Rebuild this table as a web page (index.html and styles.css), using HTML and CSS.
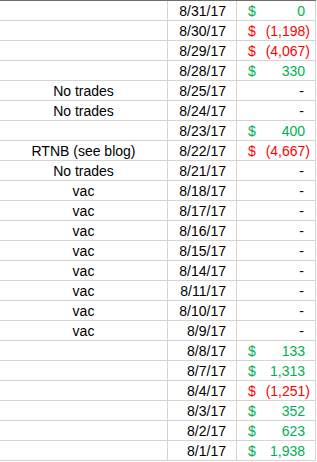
FILE: index.html
```
<!DOCTYPE html>
<html>
<head>
<meta charset="utf-8">
<link rel="stylesheet" href="styles.css">
</head>
<body>
<table class="sheet">
<tr><td class="note"></td><td class="date">8/31/17</td><td class="money pos"><span class="cur">$</span><span class="amt">0</span></td></tr>
<tr><td class="note"></td><td class="date">8/30/17</td><td class="money neg"><span class="cur">$</span><span class="amt">(1,198)</span></td></tr>
<tr><td class="note"></td><td class="date">8/29/17</td><td class="money neg"><span class="cur">$</span><span class="amt">(4,067)</span></td></tr>
<tr><td class="note"></td><td class="date">8/28/17</td><td class="money pos"><span class="cur">$</span><span class="amt">330</span></td></tr>
<tr><td class="note">No trades</td><td class="date">8/25/17</td><td class="money nil"><span class="amt">-</span></td></tr>
<tr><td class="note">No trades</td><td class="date">8/24/17</td><td class="money nil"><span class="amt">-</span></td></tr>
<tr><td class="note"></td><td class="date">8/23/17</td><td class="money pos"><span class="cur">$</span><span class="amt">400</span></td></tr>
<tr><td class="note">RTNB (see blog)</td><td class="date">8/22/17</td><td class="money neg"><span class="cur">$</span><span class="amt">(4,667)</span></td></tr>
<tr><td class="note">No trades</td><td class="date">8/21/17</td><td class="money nil"><span class="amt">-</span></td></tr>
<tr><td class="note">vac</td><td class="date">8/18/17</td><td class="money nil"><span class="amt">-</span></td></tr>
<tr><td class="note">vac</td><td class="date">8/17/17</td><td class="money nil"><span class="amt">-</span></td></tr>
<tr><td class="note">vac</td><td class="date">8/16/17</td><td class="money nil"><span class="amt">-</span></td></tr>
<tr><td class="note">vac</td><td class="date">8/15/17</td><td class="money nil"><span class="amt">-</span></td></tr>
<tr><td class="note">vac</td><td class="date">8/14/17</td><td class="money nil"><span class="amt">-</span></td></tr>
<tr><td class="note">vac</td><td class="date">8/11/17</td><td class="money nil"><span class="amt">-</span></td></tr>
<tr><td class="note">vac</td><td class="date">8/10/17</td><td class="money nil"><span class="amt">-</span></td></tr>
<tr><td class="note">vac</td><td class="date">8/9/17</td><td class="money nil"><span class="amt">-</span></td></tr>
<tr><td class="note"></td><td class="date">8/8/17</td><td class="money pos"><span class="cur">$</span><span class="amt">133</span></td></tr>
<tr><td class="note"></td><td class="date">8/7/17</td><td class="money pos"><span class="cur">$</span><span class="amt">1,313</span></td></tr>
<tr><td class="note"></td><td class="date">8/4/17</td><td class="money neg"><span class="cur">$</span><span class="amt">(1,251)</span></td></tr>
<tr><td class="note"></td><td class="date">8/3/17</td><td class="money pos"><span class="cur">$</span><span class="amt">352</span></td></tr>
<tr><td class="note"></td><td class="date">8/2/17</td><td class="money pos"><span class="cur">$</span><span class="amt">623</span></td></tr>
<tr><td class="note"></td><td class="date">8/1/17</td><td class="money pos"><span class="cur">$</span><span class="amt">1,938</span></td></tr>
</table>
</body>
</html>
```
FILE: styles.css
```
html, body {
  margin: 0;
  padding: 0;
  background: #ffffff;
}
.sheet {
  border-collapse: separate;
  border-spacing: 0;
  border-top: 1px solid #6e6e6e;
  font-family: "Liberation Sans", Arial, sans-serif;
  font-size: 14px;
  color: #000000;
  table-layout: fixed;
  width: 316px;
}
.sheet td {
  height: 19px;
  padding: 1px 0 0 0;
  box-sizing: border-box;
  line-height: 18px;
  border-right: 1px solid #d4d4d4;
  border-bottom: 1px solid #d4d4d4;
  white-space: nowrap;
  overflow: hidden;
}
.sheet tr {
  height: 20px;
}
.sheet td.note {
  width: 168px;
  text-align: center;
}
.sheet td.date {
  width: 69px;
  text-align: right;
  padding-right: 10px;
}
.sheet td.money {
  width: 79px;
}
.cur {
  float: left;
  margin-left: 11px;
}
.amt {
  float: right;
  margin-right: 5px;
}
.pos { color: #00b050; }
.pos .amt { margin-right: 10px; }
.neg { color: #ff0000; }
.nil { color: #000000; }
.nil .amt { margin-right: 11px; }
```
